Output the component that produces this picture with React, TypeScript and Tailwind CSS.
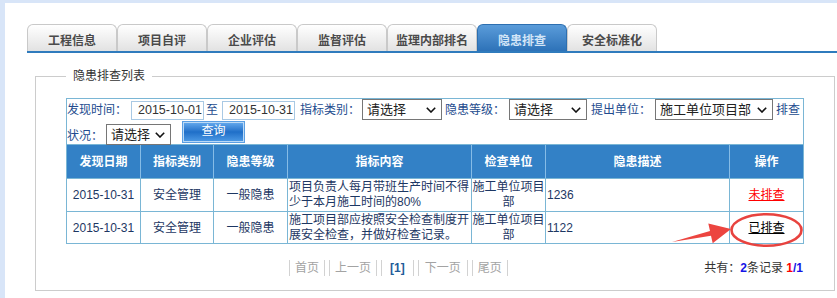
import React from "react";

const tabs = ["工程信息", "项目自评", "企业评估", "监督评估", "监理内部排名", "隐患排查", "安全标准化"];

function Chevron() {
  return (
    <svg width="10" height="6" viewBox="0 0 10 6" className="shrink-0">
      <path d="M0.8 0.8 L5 5 L9.2 0.8" fill="none" stroke="#111" strokeWidth="1.6" />
    </svg>
  );
}

function Sel({ cls, text }: { cls: string; text: string }) {
  return (
    <div className={cls}>
      <span className="whitespace-nowrap">{text}</span>
      <Chevron />
    </div>
  );
}

const selBase =
  "flex items-center justify-between border border-[#767676] bg-white pl-[4px] pr-[5px] text-[13px] leading-[16px] text-[#222]";

export default function App() {
  return (
    <div className="relative w-[837px] h-[298px] bg-[#d8e5f8] pt-[3px] pl-[5px] font-['Liberation_Sans','Noto_Sans_CJK_SC',sans-serif] overflow-hidden">
      <div className="h-full bg-white pt-[21px]">
        {/* Tabs */}
        <div className="ml-[22px] flex border-b-2 border-[#2f7bbd]">
          {tabs.map((t) =>
            t === "隐患排查" ? (
              <div
                key={t}
                className="w-[90px] h-[27px] rounded-t-[6px] border border-b-0 border-[#2d6fb0] bg-linear-to-b from-[#5a9cda] to-[#2d72b8] text-[#d3e5f7] font-bold text-[12px] leading-[16px] pt-[8px] text-center"
              >
                {t}
              </div>
            ) : (
              <div
                key={t}
                className="w-[90px] h-[27px] rounded-t-[6px] border border-b-0 border-[#c9c9c9] bg-linear-to-b from-white to-[#e2e2e2] text-[#4a4a4a] font-bold text-[12px] leading-[16px] pt-[8px] text-center"
              >
                {t}
              </div>
            )
          )}
        </div>

        {/* Fieldset */}
        <fieldset className="ml-[30px] mt-[15px] w-[800px] border border-[#cccccc] pl-[30px] pt-[14px] pb-[14px]">
          <legend className="px-[7px] text-[12px] leading-[16px] text-[#333]">隐患排查列表</legend>

          <div className="w-[738px] border border-[#7ab6d5]">
            {/* Filter */}
            <div className="h-[46px] border-b border-[#7ab6d5] text-[12px] text-[#234b8e]">
              <div className="flex items-start h-[21px]">
                <span className="mt-[3px] leading-[16px] whitespace-nowrap">发现时间：</span>
                <div className="ml-[4px] mt-[2px] w-[73px] h-[19px] border border-[#a9c9e4] pl-[6px] text-[12.5px] leading-[17px] text-[#333] overflow-hidden whitespace-nowrap">
                  2015-10-01
                </div>
                <span className="ml-[2px] mt-[3px] leading-[16px]">至</span>
                <div className="ml-[4px] mt-[2px] w-[73px] h-[19px] border border-[#a9c9e4] pl-[6px] text-[12.5px] leading-[17px] text-[#333] overflow-hidden whitespace-nowrap">
                  2015-10-31
                </div>
                <span className="ml-[5px] mt-[3px] leading-[16px] whitespace-nowrap">指标类别：</span>
                <Sel cls={selBase + " ml-[2px] w-[80px] h-[21px]"} text="请选择" />
                <span className="ml-[3px] mt-[3px] leading-[16px] whitespace-nowrap">隐患等级：</span>
                <Sel cls={selBase + " ml-[4px] w-[78px] h-[21px]"} text="请选择" />
                <span className="ml-[4px] mt-[3px] leading-[16px] whitespace-nowrap">提出单位：</span>
                <Sel cls={selBase + " ml-[4px] w-[118px] h-[21px]"} text="施工单位项目部" />
                <span className="ml-[3px] mt-[3px] leading-[16px] whitespace-nowrap">排查</span>
              </div>
              <div className="flex items-start h-[25px]">
                <span className="mt-[8px] leading-[16px] whitespace-nowrap">状况：</span>
                <Sel cls={selBase + " ml-[3px] mt-[4px] w-[65px] h-[21px]"} text="请选择" />
                <div className="ml-[11px] mt-[1px] w-[63px] h-[22px] border border-[#5a9fe3] shadow-[inset_0_0_0_1px_#bcdaf6] bg-linear-to-b from-[#66acef] via-[#1f6fc8] to-[#4d9be6] text-white text-[12px] leading-[18px] text-center">
                  查询
                </div>
              </div>
            </div>

            {/* Table */}
            <div className="grid grid-cols-[74px_73px_74px_184px_74px_184px_73px] text-[12px]">
              {["发现日期", "指标类别", "隐患等级", "指标内容", "检查单位", "隐患描述", "操作"].map((h, i) => (
                <div
                  key={h}
                  className={
                    i === 6
                      ? "h-[33px] flex items-center justify-center bg-[#3381c6] text-white font-bold"
                      : "h-[33px] flex items-center justify-center bg-[#3381c6] text-white font-bold border-r border-[#86bce6]"
                  }
                >
                  {h}
                </div>
              ))}

              {/* Row 1 */}
              <div className="h-[33px] border-t border-r border-[#7ab6d5] flex items-center justify-center text-[#1d3763]">2015-10-31</div>
              <div className="h-[33px] border-t border-r border-[#7ab6d5] flex items-center justify-center text-[#1d3763]">安全管理</div>
              <div className="h-[33px] border-t border-r border-[#7ab6d5] flex items-center justify-center text-[#1d3763]">一般隐患</div>
              <div className="h-[33px] border-t border-r border-[#7ab6d5] flex items-center pl-[1px] leading-[15px] text-[#1d3763]">
                <div>项目负责人每月带班生产时间不得<br />少于本月施工时间的80%</div>
              </div>
              <div className="h-[33px] border-t border-r border-[#7ab6d5] flex items-center justify-center text-center leading-[15px] text-[#1d3763]">
                <div>施工单位项目<br />部</div>
              </div>
              <div className="h-[33px] border-t border-r border-[#7ab6d5] flex items-center pl-[1px] text-[#1d3763]">1236</div>
              <div className="h-[33px] border-t border-[#7ab6d5] flex items-center justify-center">
                <span className="text-[#ff0000] underline">未排查</span>
              </div>

              {/* Row 2 */}
              <div className="h-[32px] border-t border-r border-[#7ab6d5] flex items-center justify-center text-[#1d3763]">2015-10-31</div>
              <div className="h-[32px] border-t border-r border-[#7ab6d5] flex items-center justify-center text-[#1d3763]">安全管理</div>
              <div className="h-[32px] border-t border-r border-[#7ab6d5] flex items-center justify-center text-[#1d3763]">一般隐患</div>
              <div className="h-[32px] border-t border-r border-[#7ab6d5] flex items-center pl-[1px] leading-[15px] text-[#1d3763]">
                <div>施工项目部应按照安全检查制度开<br />展安全检查，并做好检查记录。</div>
              </div>
              <div className="h-[32px] border-t border-r border-[#7ab6d5] flex items-center justify-center text-center leading-[15px] text-[#1d3763]">
                <div>施工单位项目<br />部</div>
              </div>
              <div className="h-[32px] border-t border-r border-[#7ab6d5] flex items-center pl-[1px] text-[#1d3763]">1122</div>
              <div className="h-[32px] border-t border-[#7ab6d5] flex items-center justify-center">
                <span className="text-black underline">已排查</span>
              </div>
            </div>
          </div>

          {/* Pagination */}
          <div className="w-[738px] mt-[16px] h-[16px] flex items-center justify-between text-[12px] leading-[16px]">
            <div className="ml-[223px] flex gap-[4px] text-[#a3a3a3]">
              <span className="px-[5px] border-x border-[#d2d2d2]">首页</span>
              <span className="px-[5px] border-x border-[#d2d2d2]">上一页</span>
              <span className="px-[8px] border-x border-[#d2d2d2] font-bold text-[#1f5c99]">[1]</span>
              <span className="px-[6px] border-x border-[#d2d2d2]">下一页</span>
              <span className="px-[5px] border-x border-[#d2d2d2]">尾页</span>
            </div>
            <div className="text-[#333] whitespace-nowrap pr-[1px]">
              共有：<span className="font-bold text-[#1414e6]">2</span>条记录 <span className="font-bold text-[#ff0000]">1</span>
              <span className="font-bold text-[#1414e6]">/1</span>
            </div>
          </div>
        </fieldset>
      </div>

      {/* Annotation overlay */}
      <svg className="absolute left-0 top-0 pointer-events-none" width="837" height="298" viewBox="0 0 837 298">
        <ellipse cx="766.5" cy="230" rx="35" ry="15.8" fill="none" stroke="#e8433f" strokeWidth="2.6" />
        <polygon
          points="672,242 711,235.8 712.7,243.3 731,229 708.3,223.5 710,231"
          fill="#ec4540"
        />
      </svg>
    </div>
  );
}
